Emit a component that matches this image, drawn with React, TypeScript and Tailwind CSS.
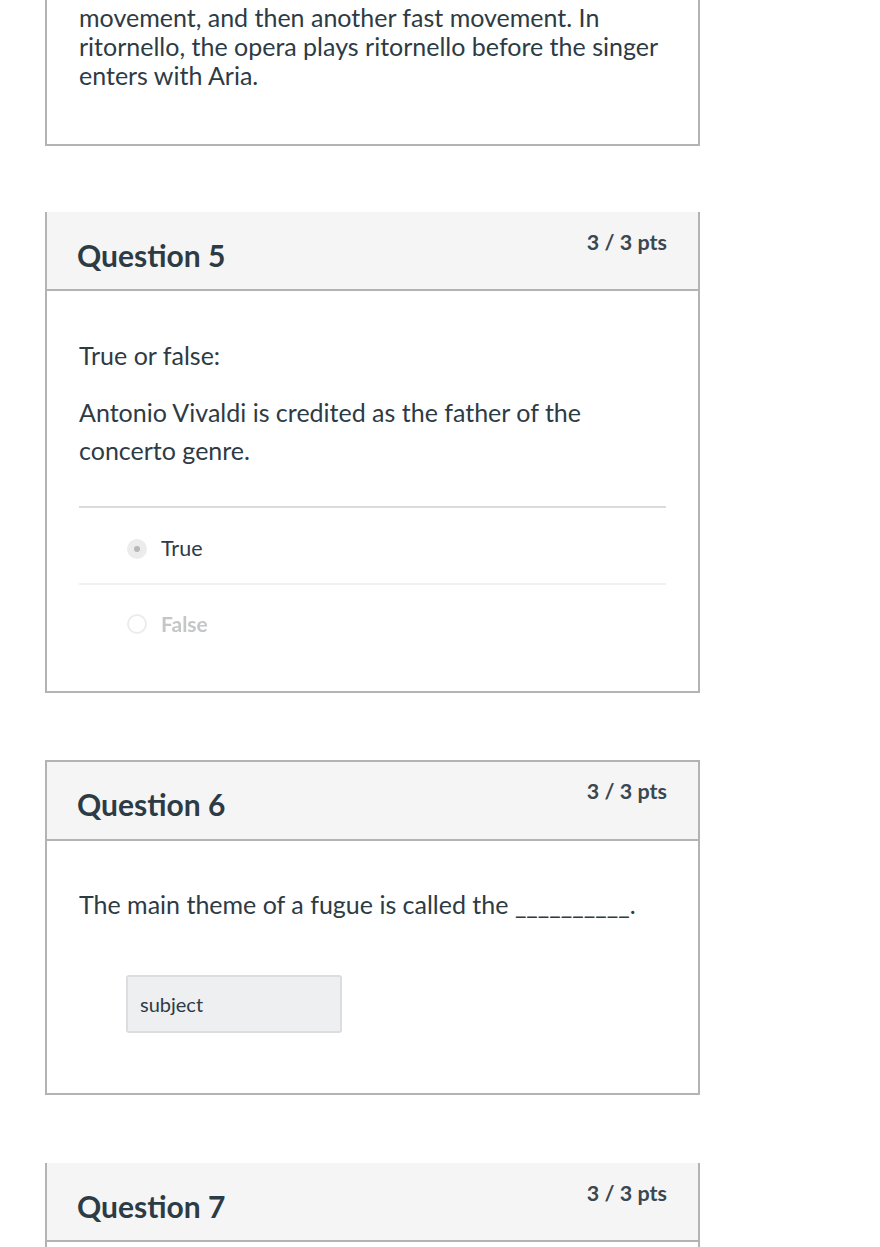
import { ReactNode } from "react";

const font = { fontFamily: "Lato, 'Open Sans', sans-serif" };

const Header = ({ title, pts, top }: { title: string; pts: string; top?: boolean }) => (
  <div className="flex justify-between h-[79px] bg-[#f5f5f6] border-b-2 border-[#b3b3b3] pl-[30px] pr-[31px]">
    <div
      className={`text-[30px] leading-[34px] font-bold text-[#2d3b45] ${top ? "pt-[25px]" : "pt-[26px]"}`}
    >
      {title}
    </div>
    <div className={`text-[21.5px] leading-[24px] font-bold text-[#3b4750] ${top ? "pt-[17px]" : "pt-[18px]"}`}>
      {pts}
    </div>
  </div>
);

const Card = ({ children, top }: { children: ReactNode; top?: boolean }) => (
  <div className={`w-[655px] border-x-2 border-b-2 border-[#b3b3b3] bg-white ${top ? "border-t-2" : ""}`}>
    {children}
  </div>
);

export default function App() {
  return (
    <div className="min-h-screen bg-white text-[#2d3b45] pl-[45px]" style={font}>
      {/* tail of the previous question */}
      <div className="w-[655px] border-x-2 border-b-2 border-[#b3b3b3] px-[32px] pt-[3px] pb-[54px]">
        <p className="text-[25px] leading-[29px]">
          movement, and then another fast movement. In ritornello, the opera plays ritornello before the singer
          enters with Aria.
        </p>
      </div>

      <div className="h-[66px]" />

      <Card>
        <Header title="Question 5" pts="3 / 3 pts" />
        <div className="px-[32px] pt-[45px] pb-[30px]">
          <p className="text-[25px] leading-[38px]">True or false:</p>
          <p className="mt-[19px] text-[25px] leading-[38px] pr-[60px]">
            Antonio Vivaldi is credited as the father of the concerto genre.
          </p>
          <div className="mt-[37px] border-t-2 border-[#d9dcde]">
            <div className="flex items-center h-[77px] pt-[6px] pl-[48px] border-b-2 border-[#f0f1f2]">
              <span className="w-[20px] h-[20px] rounded-full bg-[#ececec] flex items-center justify-center">
                <span className="w-[6px] h-[6px] rounded-full bg-[#b8b8b8]" />
              </span>
              <span className="ml-[14px] text-[21.5px] text-[#2d3b45]">True</span>
            </div>
            <div className="flex items-center h-[76px] pt-[2px] pl-[48px]">
              <span className="w-[20px] h-[20px] rounded-full border-2 border-[#ececec] bg-white" />
              <span className="ml-[14px] text-[21px] font-bold text-[#c4c6c8] blur-[0.6px]">False</span>
            </div>
          </div>
        </div>
      </Card>

      <div className="h-[67px]" />

      <Card top>
        <Header title="Question 6" pts="3 / 3 pts" top />
        <div className="px-[32px] pt-[44px] pb-[60px]">
          <p className="text-[25px] leading-[38px]">The main theme of a fugue is called the __________.</p>
          <div className="mt-[52px] ml-[47px] w-[216px] h-[58px] rounded-[3px] border-2 border-[#dcdde0] bg-[#eeeff1] flex items-center pl-[12px] text-[20px] text-[#2d3b45]">
            subject
          </div>
        </div>
      </Card>

      <div className="h-[68px]" />

      <div className="w-[655px] border-x-2 border-[#b3b3b3] h-[90px]">
        <Header title="Question 7" pts="3 / 3 pts" />
      </div>
    </div>
  );
}
